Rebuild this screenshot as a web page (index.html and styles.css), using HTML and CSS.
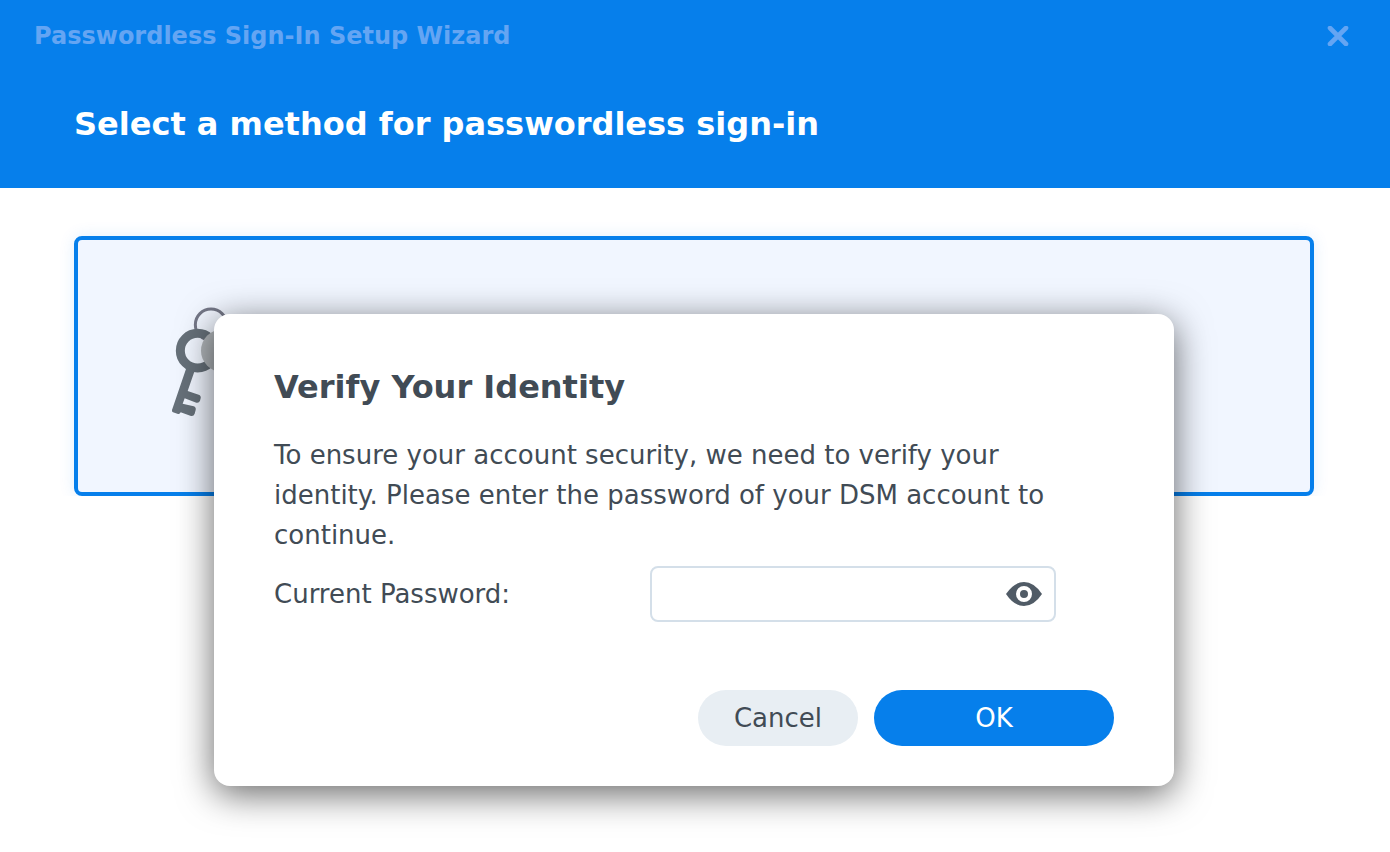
FILE: index.html
```html
<!DOCTYPE html>
<html lang="en">
<head>
    <meta charset="UTF-8">
    <meta name="viewport" content="width=device-width, initial-scale=1.0">
    <title>Passwordless Sign-In Setup Wizard</title>
    <link rel="stylesheet" href="styles.css">
</head>
<body>
    <header class="wizard-header">
        <div class="title-bar">
            <span class="window-title">Passwordless Sign-In Setup Wizard</span>
            <button type="button" class="close-btn" aria-label="Close">
                <svg width="22" height="20" viewBox="0 0 22 20">
                    <path d="M3 2L19 18M19 2L3 18" fill="none" stroke="currentColor" stroke-width="4.6" stroke-linecap="round"/>
                </svg>
            </button>
        </div>
        <h1>Select a method for passwordless sign-in</h1>
    </header>

    <main class="wizard-body">
        <div class="method-card">
            <svg class="keys-icon" width="80" height="110" viewBox="60 51 240 330">
                <circle cx="183" cy="104" r="47" fill="none" stroke="#747787" stroke-width="9"/>
                <circle cx="143" cy="182" r="52" fill="none" stroke="#667079" stroke-width="27"/>
                <path d="M109 234L134 242L113 303L146 314Q154 317 152 325L150 332Q147 340 139 338L104 325L98 341L131 349Q139 352 137 360L134 371Q131 380 123 378L92 367Q89 374 82 371L69 367Q65 365 66 360Z" fill="#667079"/>
                <circle cx="217" cy="182" r="64" fill="#b1b6ba"/>
            </svg>
        </div>
    </main>

    <div class="overlay">
        <form class="dialog" role="dialog" aria-labelledby="dialog-title">
            <h2 id="dialog-title">Verify Your Identity</h2>
            <p>To ensure your account security, we need to verify your identity. Please enter the password of your DSM account to continue.</p>
            <div class="field">
                <label for="password">Current Password:</label>
                <div class="input-wrap">
                    <input type="password" id="password">
                    <button type="button" class="eye-btn" aria-label="Show password">
                        <svg width="36" height="24" viewBox="0 0 36 24">
                            <path d="M0 12Q8 0 18 0Q28 0 36 12Q28 24 18 24Q8 24 0 12Z" fill="#505b66"/>
                            <circle cx="18" cy="12" r="6" fill="#505b66" stroke="#fff" stroke-width="4"/>
                        </svg>
                    </button>
                </div>
            </div>
            <div class="buttons">
                <button type="button" class="btn cancel">Cancel</button>
                <button type="submit" class="btn ok">OK</button>
            </div>
        </form>
    </div>
</body>
</html>
```
FILE: styles.css
```css
* {
    box-sizing: border-box;
}
body {
    margin: 0;
    background: #fff;
    color: #414b55;
    font-family: Verdana, "DejaVu Sans", sans-serif;
    font-size: 26px;
    line-height: 40px;
}
h1, h2, p {
    margin: 0;
}
button {
    border: none;
    font: inherit;
    cursor: pointer;
}
svg {
    display: block;
}
.wizard-header {
    height: 188px;
    padding-top: 16px;
    background: #067feb;
}
.title-bar {
    display: flex;
    align-items: center;
    justify-content: space-between;
    padding: 0 41px 0 34px;
    color: #64a5f3;
}
.window-title {
    font-size: 24px;
    font-weight: bold;
}
.close-btn {
    padding: 0;
    background: none;
    color: inherit;
}
.wizard-header h1 {
    padding: 48px 74px 0;
    color: #fff;
    font-size: 32px;
}
.wizard-body {
    padding: 48px 76px 0 74px;
}
.method-card {
    height: 260px;
    padding: 67px 92px;
    border: 4px solid #067feb;
    border-radius: 8px;
    background: #f1f6ff;
    box-shadow: 0 0 16px rgba(6, 127, 235, 0.12);
}
/* dialog sits on top of the wizard */
.overlay {
    position: absolute;
    top: 0;
    left: 0;
    right: 0;
    display: flex;
    justify-content: center;
    padding: 314px 76px 0 74px;
}
.dialog {
    width: 960px;
    padding: 53px 60px 40px;
    border-radius: 16px;
    background: #fff;
    box-shadow: 0 8px 36px rgba(0, 0, 0, 0.6);
}
.dialog h2 {
    margin-bottom: 28px;
    font-size: 32px;
}
.dialog p {
    max-width: 800px;
}
.field {
    display: flex;
    align-items: center;
    margin-top: 11px;
}
.field label {
    width: 376px;
}
.input-wrap {
    position: relative;
    width: 406px;
}
.input-wrap input {
    display: block;
    width: 100%;
    height: 56px;
    padding: 0 60px 0 16px;
    border: 2px solid #d4dfe9;
    border-radius: 8px;
    background: #fff;
    color: inherit;
    font: inherit;
}
.eye-btn {
    position: absolute;
    top: 16px;
    right: 14px;
    padding: 0;
    background: none;
}
.buttons {
    display: flex;
    justify-content: flex-end;
    gap: 16px;
    margin-top: 68px;
}
.btn {
    height: 56px;
    padding: 0;
    border-radius: 28px;
}
.cancel {
    width: 160px;
    background: #e8eef3;
    color: #414b55;
}
.ok {
    width: 240px;
    background: #067feb;
    color: #fff;
}
```
